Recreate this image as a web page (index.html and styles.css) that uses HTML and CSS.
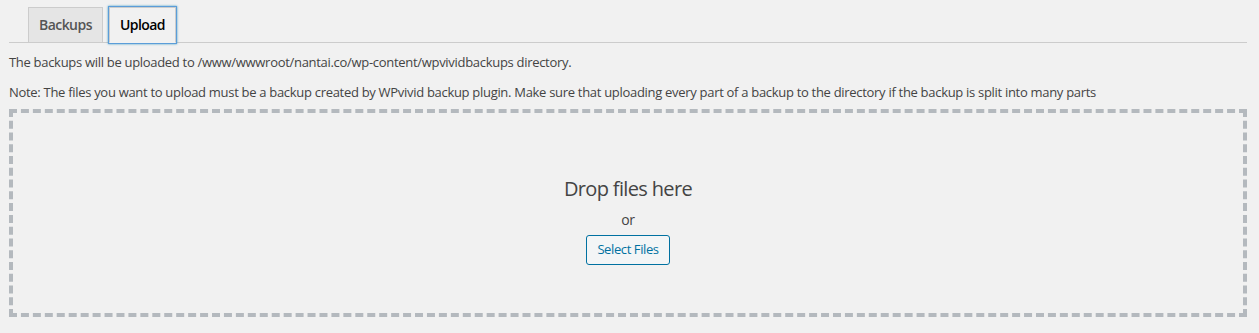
FILE: index.html
```html
<!DOCTYPE html>
<html lang="en">
<head>
    <meta charset="UTF-8">
    <meta name="viewport" content="width=device-width, initial-scale=1.0">
    <title>Upload Backup</title>
    <link rel="stylesheet" href="styles.css">
</head>
<body>

    <div class="backup-wrap">
        <div class="nav-tab-wrapper">
            <a class="nav-tab" href="#">Backups</a>
            <a class="nav-tab nav-tab-active" href="#">Upload</a>
        </div>

        <p class="upload-info">The backups will be uploaded to /www/wwwroot/nantai.co/wp-content/wpvividbackups directory.</p>
        <p class="upload-info upload-note">Note: The files you want to upload must be a backup created by WPvivid backup plugin. Make sure that uploading every part of a backup to the directory if the backup is split into many parts</p>

        <!-- Drop area -->
        <div class="drag-drop-area">
            <div class="drag-drop-inside">
                <p class="drag-drop-info">Drop files here</p>
                <p>or</p>
                <p class="drag-drop-buttons"><button type="button" class="button">Select Files</button></p>
            </div>
        </div>
    </div>

</body>
</html>
```

FILE: styles.css
```css
/* Base Styles */

body {
    margin: 0;
    background-color: #f1f1f1;
    color: #444;
    font-family: "Open Sans", "Noto Sans", sans-serif;
    font-size: 13px;
    letter-spacing: -0.3px;
}

.backup-wrap {
    padding: 0 12px 0 9px;
}

.nav-tab-wrapper {
    display: flex;
    gap: 6px;
    padding: 7px 0 0 19px;
    border-bottom: 1px solid #ccc;
}

.nav-tab {
    padding: 5px 10px;
    border: 1px solid #ccc;
    border-bottom: none;
    background-color: #e5e5e5;
    color: #555;
    font-size: 14px;
    font-weight: 600;
    line-height: 24px;
    letter-spacing: -0.55px;
    text-decoration: none;
}

.nav-tab-active {
    margin-bottom: -1px;
    border-bottom: 1px solid #f1f1f1;
    background-color: #f1f1f1;
    color: #000;
    box-shadow: 0 0 0 1px #5b9dd9, 0 0 2px 1px rgba(30, 140, 190, 0.8);
}

.upload-info {
    margin: 10px 0;
    line-height: 1.5;
}

.upload-note {
    margin-bottom: 7px;
}

.drag-drop-area {
    height: 200px;
    border: 4px dashed #b4b9be;
}

.drag-drop-inside {
    width: 250px;
    margin: 61px auto 0;
    text-align: center;
}

.drag-drop-inside p {
    margin: 5px 0;
    font-size: 14px;
    line-height: 1.5;
}

.drag-drop-inside .drag-drop-info {
    font-size: 20px;
    letter-spacing: -0.65px;
}

.button {
    min-height: 30px;
    padding: 0 10px;
    border: 1px solid #0071a1;
    border-radius: 3px;
    background-color: #f3f5f6;
    color: #0071a1;
    font-family: inherit;
    font-size: 13px;
    line-height: 2.15;
    letter-spacing: -0.4px;
    cursor: pointer;
}
```
